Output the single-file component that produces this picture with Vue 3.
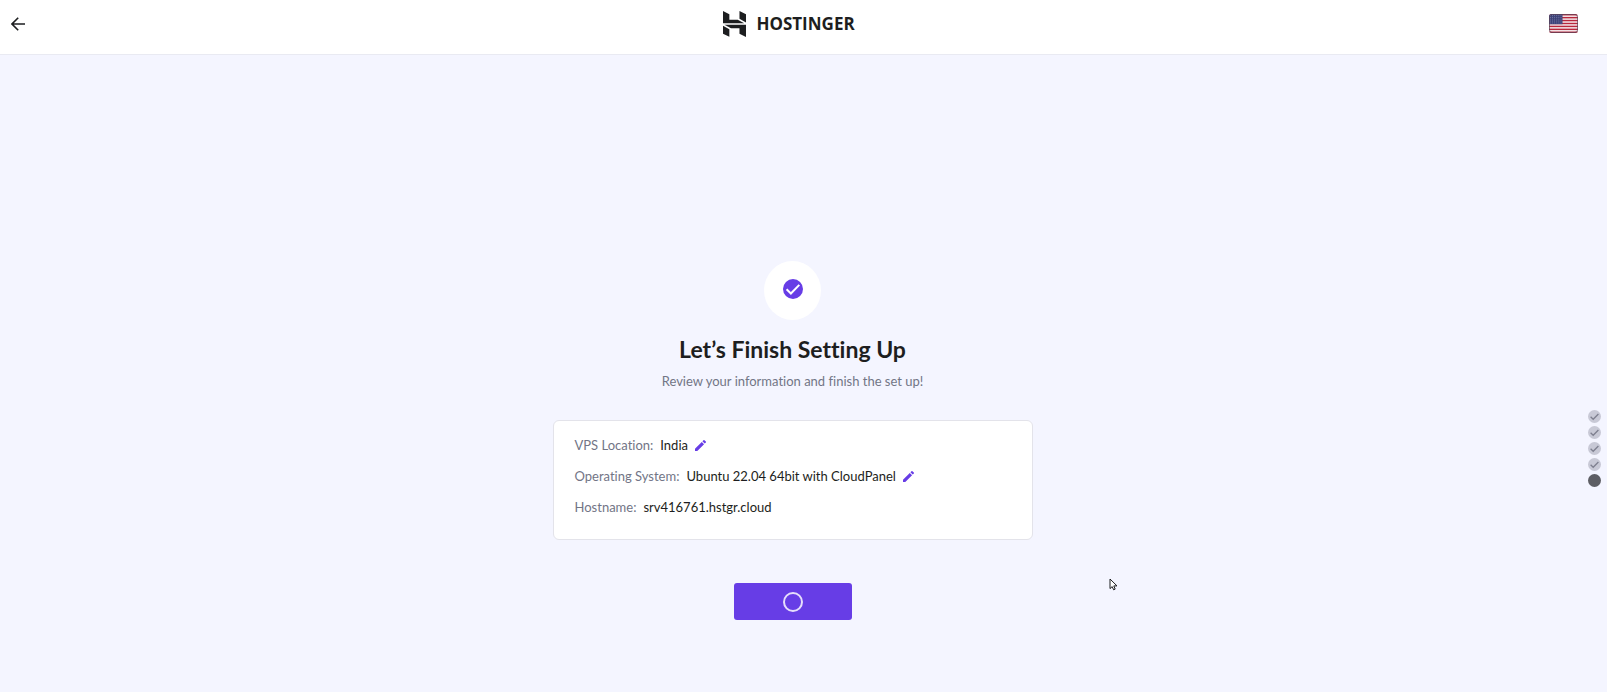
<template>
  <div class="setup-page">
    <header class="top-bar">
      <button class="icon-btn back-btn" type="button" aria-label="Back">
        <svg width="14" height="14" viewBox="0 0 14 14">
          <path d="M14 7H1.5M7.2 .8L1 7l6.2 6.2" fill="none" stroke="#1d1e20" stroke-width="1.6" />
        </svg>
      </button>

      <a class="logo" href="#" aria-label="Hostinger">
        <svg width="23" height="26" viewBox="1.8 0 20.4 24" preserveAspectRatio="none">
          <path
            fill="#1d1e20"
            d="M16.415 0v7.16l5.785 3.384V2.949L16.415 0ZM1.8 0v11.237h18.815L14.89 8.09l-7.457-.003V3.024L1.8 0Zm14.615 20.894v-5.019l-7.514-.005c.007.033-5.82-3.197-5.82-3.197l19.119.091V24l-5.785-3.106ZM1.8 13.551v7.343l5.633 2.949v-6.988L1.8 13.551Z"
          />
        </svg>
        <span>HOSTINGER</span>
      </a>

      <button class="icon-btn flag-btn" type="button" aria-label="Language: English (US)">
        <svg width="29" height="19" viewBox="0 0 29 19">
          <defs>
            <clipPath id="flag-clip"><rect width="29" height="19" rx="2.5" /></clipPath>
          </defs>
          <g clip-path="url(#flag-clip)">
            <rect width="29" height="19" fill="#f6eef1" />
            <rect v-for="n in 7" :key="n" x="0" :y="(n - 1) * 2.92" width="29" height="1.46" fill="#b8283c" />
            <rect width="13.5" height="10.2" fill="#3d4278" />
            <template v-for="row in 5" :key="row">
              <circle v-for="col in 6" :key="col" :cx="col * 2.1 - 0.6" :cy="row * 1.9 - 0.6" r="0.45" fill="#a9add0" />
            </template>
          </g>
          <rect x=".5" y=".5" width="28" height="18" rx="2.5" fill="none" stroke="#5a4458" stroke-opacity=".7" />
        </svg>
      </button>
    </header>

    <main class="content">
      <section class="finish">
        <div class="badge">
          <svg width="20" height="20" viewBox="0 0 20 20">
            <circle cx="10" cy="10" r="10" fill="#673de6" />
            <path d="M3.6 10.2l4.3 4.3 8.4-8.6" fill="none" stroke="#fff" stroke-width="2" />
          </svg>
        </div>
        <h1>Let’s Finish Setting Up</h1>
        <p class="subtitle">Review your information and finish the set up!</p>

        <dl class="summary">
          <div v-for="item in items" :key="item.label" class="summary-row">
            <dt>{{ item.label }}:</dt>
            <dd>{{ item.value }}</dd>
            <dd v-if="item.editable" class="edit">
              <button class="icon-btn" type="button" :aria-label="'Edit ' + item.label">
                <svg width="11" height="11" viewBox="3 3 18 18">
                  <path
                    fill="#673de6"
                    d="M3 17.25V21h3.75L17.81 9.94l-3.75-3.75L3 17.25zM20.71 7.04a1 1 0 0 0 0-1.41l-2.34-2.34a1 1 0 0 0-1.41 0l-1.83 1.83 3.75 3.75 1.83-1.83z"
                  />
                </svg>
              </button>
            </dd>
          </div>
        </dl>

        <button class="finish-btn" type="button" aria-label="Finishing set up">
          <span class="spinner"></span>
        </button>
      </section>

      <ol class="steps">
        <li v-for="step in 5" :key="step" :class="{ current: step === 5 }">
          <svg v-if="step < 5" width="13" height="13" viewBox="0 0 13 13">
            <path d="M2.6 6.8l2.6 2.5 5.2-5.3" fill="none" stroke="#7f8090" stroke-width="1.3" />
          </svg>
        </li>
      </ol>
    </main>

    <svg class="pointer" width="9" height="13" viewBox="0 0 9 13">
      <path d="M1 1v9.6l2.2-2 1.4 3.2 1.6-.7-1.4-3.2H8L1 1z" fill="#fff" stroke="#1d1e20" />
    </svg>
  </div>
</template>

<script setup>
const items = [
  { label: 'VPS Location', value: 'India', editable: true },
  { label: 'Operating System', value: 'Ubuntu 22.04 64bit with CloudPanel', editable: true },
  { label: 'Hostname', value: 'srv416761.hstgr.cloud', editable: false }
]
</script>

<style>
body {
  background: #f4f5ff;
}
</style>

<style scoped>
.setup-page {
  position: relative;
  min-height: 100vh;
  box-sizing: border-box;
  color: #1d1e20;
  font-family: "Lato", "Open Sans", sans-serif;
  font-variant-ligatures: none;
}

.icon-btn {
  display: flex;
  padding: 0;
  border: none;
  background: none;
  cursor: pointer;
}

/* Header */
.top-bar {
  display: grid;
  grid-template-columns: 1fr auto 1fr;
  align-items: center;
  height: 55px;
  padding: 0 29px 7px 0;
  box-sizing: border-box;
  border-bottom: 1px solid #e9eaf2;
  background: #fff;
}

.back-btn {
  justify-self: start;
  margin-left: 11px;
}

.flag-btn {
  justify-self: end;
}

.logo {
  display: flex;
  align-items: center;
  gap: 10px;
  color: #1d1e20;
  font-family: "Open Sans", sans-serif;
  font-size: 17px;
  font-weight: 700;
  line-height: 24px;
  text-decoration: none;
}

/* Content */
.content {
  display: flex;
  align-items: flex-start;
}

.finish {
  flex: 1;
  display: flex;
  flex-direction: column;
  align-items: center;
  padding: 206px 16px 72px;
}

.badge {
  display: flex;
  align-items: center;
  justify-content: center;
  width: 57px;
  height: 59px;
  padding-bottom: 4px;
  box-sizing: border-box;
  border-radius: 50%;
  background: #fff;
}

h1 {
  margin: 13px 0 0;
  font-size: 23px;
  font-weight: 700;
  line-height: 32px;
}

.subtitle {
  margin: 6px 0 0;
  color: #727586;
  font-size: 13px;
  line-height: 20px;
}

.summary {
  display: flex;
  flex-direction: column;
  gap: 11px;
  width: 100%;
  max-width: 480px;
  min-height: 120px;
  margin: 29px 0 0;
  padding: 14px 21px;
  box-sizing: border-box;
  border: 1px solid #e3e3ea;
  border-radius: 6px;
  background: #fff;
}

.summary-row {
  display: flex;
  align-items: center;
  gap: 7px;
  font-size: 13px;
  line-height: 20px;
}

.summary-row dt {
  color: #727586;
}

.summary-row dd {
  margin: 0;
}

.finish-btn {
  display: flex;
  align-items: center;
  justify-content: center;
  width: 118px;
  height: 37px;
  margin-top: 43px;
  border: none;
  border-radius: 3px;
  background: #673de6;
}

.spinner {
  width: 16px;
  height: 16px;
  border: 2px solid #e6defb;
  border-radius: 50%;
}

/* Progress rail */
.steps {
  display: flex;
  flex-direction: column;
  gap: 3px;
  width: 19px;
  margin: 0 3px 0 0;
  padding: 355px 0 0 3px;
  box-sizing: border-box;
  list-style: none;
}

.steps li {
  display: flex;
  width: 13px;
  height: 13px;
  border-radius: 50%;
  background: #c8c9d6;
}

.steps .current {
  background: #5d5e64;
}

.pointer {
  position: absolute;
  top: 578px;
  left: 1109px;
}
</style>
